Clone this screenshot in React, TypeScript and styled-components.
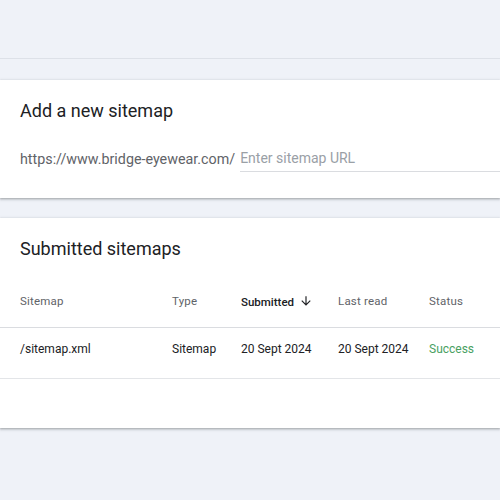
import React from 'react';
import styled, { createGlobalStyle } from 'styled-components';

const GlobalStyle = createGlobalStyle`
    html, body {
        margin: 0;
        padding: 0;
        background: #eff2f8;
        font-family: Roboto, "Noto Sans", Arial, sans-serif;
    }
`;

const Page = styled.div`
    width: 500px;
    min-height: 500px;
    overflow: hidden;
`;

const TopStrip = styled.div`
    height: 58px;
    border-bottom: 1px solid #dde1e8;
`;

const Main = styled.main`
    display: flex;
    flex-direction: column;
    gap: 20px;
    padding-top: 21px;
`;

const Card = styled.section<{ $height: number }>`
    background: #fff;
    height: ${p => p.$height}px;
    box-shadow: 0 1px 2px rgba(60, 64, 67, 0.35), 0 1px 3px 1px rgba(60, 64, 67, 0.12);
    box-sizing: border-box;
`;

const CardTitle = styled.h2`
    margin: 0;
    padding: 19px 20px 0;
    font-size: 18px;
    line-height: 24px;
    font-weight: 400;
    color: #202124;
`;

const UrlRow = styled.div`
    display: flex;
    align-items: flex-end;
    padding: 22px 0 0 20px;
`;

const Prefix = styled.span`
    font-size: 14.3px;
    line-height: 26px;
    color: #5f6368;
    padding-right: 5px;
`;

const UrlInput = styled.input`
    flex: 1;
    border: none;
    border-bottom: 1px solid #dadce0;
    outline: none;
    padding: 0;
    height: 26px;
    font-family: inherit;
    font-size: 14px;
    color: #202124;
    &::placeholder {
        color: #9aa0a6;
    }
`;

const Table = styled.table`
    width: 100%;
    table-layout: fixed;
    border-collapse: collapse;
    margin-top: 10px;
`;

const HeadCell = styled.th<{ $active?: boolean; $width?: number }>`
    text-align: left;
    font-size: 11.5px;
    letter-spacing: ${p => (p.$active ? 0 : 0.2)}px;
    font-weight: ${p => (p.$active ? 500 : 400)};
    color: ${p => (p.$active ? '#202124' : '#5f6368')};
    height: 52px;
    padding: 4px 0 0;
    border-bottom: 1px solid #dadce0;
    white-space: nowrap;
    width: ${p => (p.$width ? `${p.$width}px` : 'auto')};
    &:first-child {
        padding-left: 20px;
    }
`;

const Cell = styled.td<{ $tone?: 'success' }>`
    font-size: 12px;
    color: ${p => (p.$tone === 'success' ? '#4a9f62' : '#202124')};
    height: 42px;
    padding: 0 0 8px;
    border-bottom: 1px solid #e3e5e8;
    white-space: nowrap;
    &:first-child {
        padding-left: 20px;
    }
`;

const SortArrow = styled.svg`
    width: 14px;
    height: 14px;
    vertical-align: -2px;
    margin-left: 5px;
`;

const ArrowDown = () => (
    <SortArrow viewBox="0 0 24 24" fill="#202124">
        <path d="M20 12l-1.41-1.41L13 16.17V4h-2v12.17l-5.58-5.59L4 12l8 8 8-8z" />
    </SortArrow>
);

const App: React.FC = () => {
    return (
        <Page>
            <GlobalStyle />
            <TopStrip />
            <Main>
                <Card $height={118}>
                    <CardTitle>Add a new sitemap</CardTitle>
                    <UrlRow>
                        <Prefix>https://www.bridge-eyewear.com/</Prefix>
                        <UrlInput placeholder="Enter sitemap URL" />
                    </UrlRow>
                </Card>
                <Card $height={210}>
                    <CardTitle>Submitted sitemaps</CardTitle>
                    <Table>
                        <thead>
                            <tr>
                                <HeadCell $width={152}>Sitemap</HeadCell>
                                <HeadCell $width={69}>Type</HeadCell>
                                <HeadCell $active $width={97}>
                                    Submitted
                                    <ArrowDown />
                                </HeadCell>
                                <HeadCell $width={91}>Last read</HeadCell>
                                <HeadCell>Status</HeadCell>
                            </tr>
                        </thead>
                        <tbody>
                            <tr>
                                <Cell>/sitemap.xml</Cell>
                                <Cell>Sitemap</Cell>
                                <Cell>20 Sept 2024</Cell>
                                <Cell>20 Sept 2024</Cell>
                                <Cell $tone="success">Success</Cell>
                            </tr>
                        </tbody>
                    </Table>
                </Card>
            </Main>
        </Page>
    );
};

export default App;
